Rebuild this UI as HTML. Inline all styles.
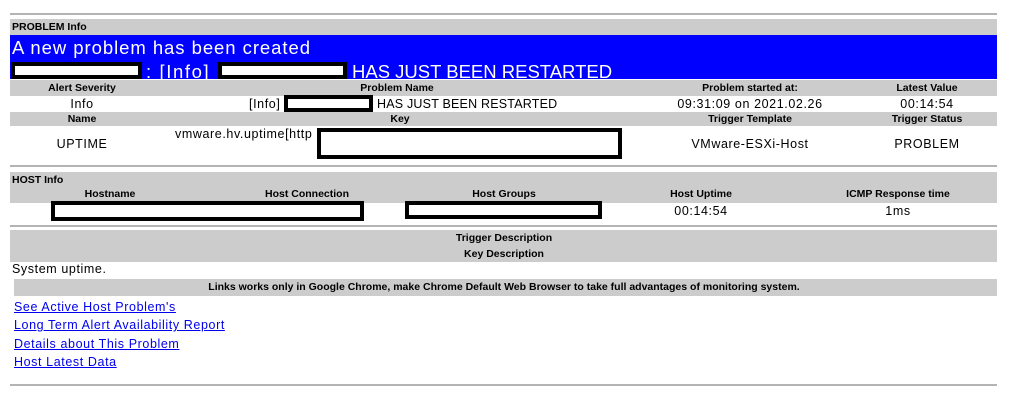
<!DOCTYPE html>
<html><head><style>
body{margin:0;width:1018px;height:404px;background:#fff;position:relative;font-family:"Liberation Sans",sans-serif;overflow:hidden}
div{position:absolute;white-space:nowrap}
.hr{left:10px;width:987px;height:0;border-top:2px solid #b4b4b4}
.g{left:10px;width:987px;background:#cccccc}
.b{font-weight:bold;font-size:10.5px;color:#000}
.c{transform:translateX(-50%)}
.t{font-size:12.5px;color:#000;letter-spacing:0.6px}
.box{border:4px solid #000;background:#fff;box-sizing:border-box}
a{color:#0000ee;text-decoration:underline;font-size:12.5px;letter-spacing:0.6px;position:absolute;left:14px;white-space:nowrap}
</style></head><body>
<div class="hr" style="top:13px"></div>
<div class="g" style="top:19px;height:16px"></div>
<div class="b" style="left:12px;top:21px">PROBLEM Info</div>
<div style="left:10px;top:35px;width:987px;height:44px;background:#0000ff"></div>
<div style="left:12px;top:37px;color:#fff;font-size:18.5px;letter-spacing:0.95px">A new problem has been created</div>
<div class="box" style="left:11px;top:62px;width:131px;height:17px"></div>
<div style="left:146px;top:61px;color:#fff;font-size:18.5px;letter-spacing:1.6px">: [Info]</div>
<div class="box" style="left:218px;top:62px;width:129px;height:17px"></div>
<div style="left:352px;top:61px;color:#fff;font-size:18.5px">HAS JUST BEEN RESTARTED</div>

<div class="g" style="top:80px;height:16px"></div>
<div class="b c" style="left:82px;top:82px">Alert Severity</div>
<div class="b c" style="left:397px;top:82px">Problem Name</div>
<div class="b c" style="left:750px;top:82px">Problem started at:</div>
<div class="b c" style="left:927px;top:82px">Latest Value</div>
<div class="t c" style="left:82px;top:97px">Info</div>
<div class="t" style="left:249px;top:97px">[Info]</div>
<div class="box" style="left:284px;top:95px;width:89px;height:17px"></div>
<div class="t" style="left:377px;top:97px;letter-spacing:0.2px">HAS JUST BEEN RESTARTED</div>
<div class="t c" style="left:750px;top:97px">09:31:09 on 2021.02.26</div>
<div class="t c" style="left:927px;top:97px">00:14:54</div>

<div class="g" style="top:112px;height:14px"></div>
<div class="b c" style="left:82px;top:113px">Name</div>
<div class="b c" style="left:400px;top:113px">Key</div>
<div class="b c" style="left:750px;top:113px">Trigger Template</div>
<div class="b c" style="left:927px;top:113px">Trigger Status</div>
<div class="t c" style="left:82px;top:137px">UPTIME</div>
<div class="t" style="left:175px;top:127px">vmware.hv.uptime[http</div>
<div class="box" style="left:317px;top:128px;width:305px;height:31px"></div>
<div class="t c" style="left:750px;top:137px">VMware-ESXi-Host</div>
<div class="t c" style="left:927px;top:137px">PROBLEM</div>

<div class="hr" style="top:165px"></div>
<div class="g" style="top:172px;height:31px"></div>
<div class="b" style="left:12px;top:174px">HOST Info</div>
<div class="b c" style="left:110px;top:188px">Hostname</div>
<div class="b c" style="left:307px;top:188px">Host Connection</div>
<div class="b c" style="left:504px;top:188px">Host Groups</div>
<div class="b c" style="left:701px;top:188px">Host Uptime</div>
<div class="b c" style="left:898px;top:188px">ICMP Response time</div>
<div class="box" style="left:51px;top:201px;width:313px;height:20px"></div>
<div class="box" style="left:405px;top:201px;width:197px;height:18px"></div>
<div class="t c" style="left:701px;top:204px">00:14:54</div>
<div class="t c" style="left:898px;top:204px">1ms</div>

<div class="hr" style="top:225px"></div>
<div class="g" style="top:230px;height:32px"></div>
<div class="b c" style="left:504px;top:232px">Trigger Description</div>
<div class="b c" style="left:504px;top:248px">Key Description</div>
<div class="t" style="left:12px;top:262px">System uptime.</div>
<div style="left:14px;top:279px;width:983px;height:17px;background:#cccccc"></div>
<div class="b c" style="left:504px;top:281px">Links works only in Google Chrome, make Chrome Default Web Browser to take full advantages of monitoring system.</div>
<a style="top:300px">See Active Host Problem's</a>
<a style="top:318px">Long Term Alert Availability Report</a>
<a style="top:337px">Details about This Problem</a>
<a style="top:355px">Host Latest Data</a>
<div class="hr" style="top:384px"></div>
</body></html>
